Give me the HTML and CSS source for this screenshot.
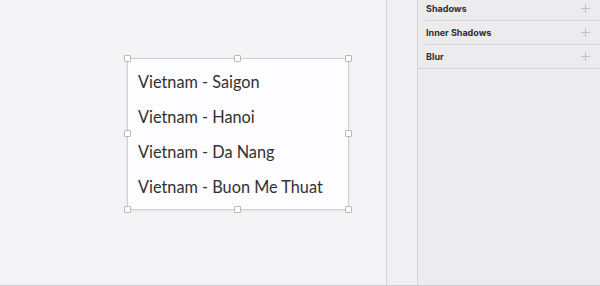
FILE: index.html
```html
<!DOCTYPE html>
<html lang="en">
<head>
  <meta charset="UTF-8" />
  <title>Canvas</title>
  <link rel="stylesheet" href="styles.css">
</head>
<body>
  <div class="app">
    <main class="canvas">
      <div class="text-box">
        <p>Vietnam - Saigon</p>
        <p>Vietnam - Hanoi</p>
        <p>Vietnam - Da Nang</p>
        <p>Vietnam - Buon Me Thuat</p>
        <span class="handle tl"></span>
        <span class="handle tm"></span>
        <span class="handle tr"></span>
        <span class="handle ml"></span>
        <span class="handle mr"></span>
        <span class="handle bl"></span>
        <span class="handle bm"></span>
        <span class="handle br"></span>
      </div>
    </main>
    <div class="gutter"></div>
    <aside class="inspector">
      <div class="row indent"><span>Shadows</span><i class="plus"></i></div>
      <div class="row indent"><span>Inner Shadows</span><i class="plus"></i></div>
      <div class="row"><span>Blur</span><i class="plus"></i></div>
    </aside>
  </div>
</body>
</html>
```

FILE: styles.css
```css
html, body {
  margin: 0;
  height: 100%;
}
body {
  background: #f4f3f5;
  overflow: hidden;
}
.app {
  display: flex;
  height: 285px;
  border-bottom: 1px solid #c9c8ca;
}
.canvas {
  width: 387px;
  padding: 58px 0 0 127px;
  box-sizing: border-box;
  border-right: 1px solid #d3d2d4;
}
.text-box {
  position: relative;
  width: 222px;
  height: 152px;
  box-sizing: border-box;
  border: 1px solid #cfcfd1;
  background: #fdfcfe;
  box-shadow: 0 1px 3px rgba(0, 0, 0, 0.07);
  padding: 5px 0 0 10px;
  font-family: Lato, "Open Sans", sans-serif;
  font-size: 16.3px;
  color: #313133;
}
.text-box p {
  margin: 0;
  line-height: 35px;
}
.handle {
  position: absolute;
  width: 5px;
  height: 5px;
  background: #fff;
  border: 1px solid #b9b9bb;
  border-radius: 1px;
}
.tl, .tm, .tr { top: -4px; }
.bl, .bm, .br { bottom: -4px; }
.ml, .mr { top: 71px; }
.tl, .ml, .bl { left: -4px; }
.tr, .mr, .br { right: -4px; }
.tm, .bm { left: 106px; }
.gutter {
  width: 30px;
  background: #f0eff1;
  border-right: 1px solid #d3d2d4;
}
.inspector {
  flex: 1;
  background: #ecebed;
  margin-top: -3px;
  font-family: Inter, "Liberation Sans", sans-serif;
  font-size: 9px;
  font-weight: 700;
  color: #2e2e30;
}
.row {
  display: flex;
  align-items: center;
  justify-content: space-between;
  height: 23px;
  padding: 0 10px 0 8px;
  border-bottom: 1px solid #d6d5d7;
}
.row.indent {
  margin-left: 7px;
  padding-left: 1px;
}
.plus {
  position: relative;
  width: 9px;
  height: 9px;
}
.plus::before, .plus::after {
  content: "";
  position: absolute;
  background: #c2c1c3;
}
.plus::before {
  left: 4px;
  top: 0;
  width: 1px;
  height: 9px;
}
.plus::after {
  top: 4px;
  left: 0;
  width: 9px;
  height: 1px;
}
```
